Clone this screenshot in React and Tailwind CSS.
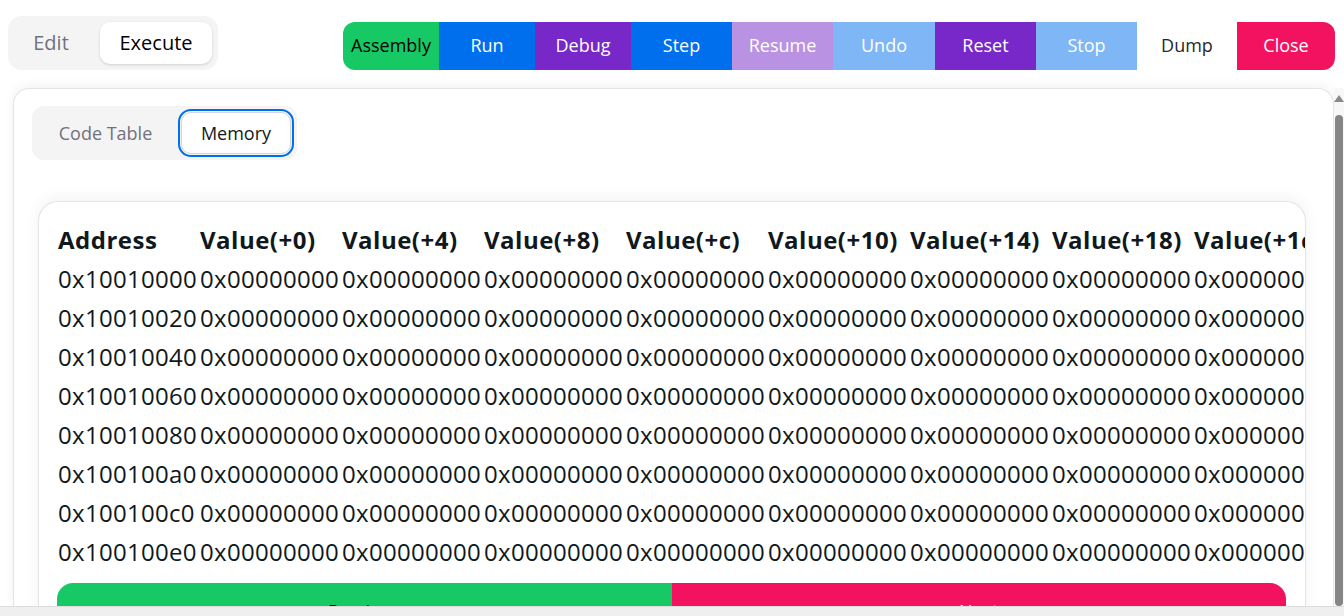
const actions = [
  { label: "Assembly", w: "w-[96px]", cls: "bg-[#17c964] text-black rounded-l-[12px]" },
  { label: "Run", w: "w-[96px]", cls: "bg-[#006fee] text-white" },
  { label: "Debug", w: "w-[96px]", cls: "bg-[#7828c8] text-white" },
  { label: "Step", w: "w-[101px]", cls: "bg-[#006fee] text-white" },
  { label: "Resume", w: "w-[101px]", cls: "bg-[#7828c8] text-white opacity-50" },
  { label: "Undo", w: "w-[102px]", cls: "bg-[#006fee] text-white opacity-50" },
  { label: "Reset", w: "w-[101px]", cls: "bg-[#7828c8] text-white" },
  { label: "Stop", w: "w-[101px]", cls: "bg-[#006fee] text-white opacity-50" },
  { label: "Dump", w: "w-[100px]", cls: "bg-transparent text-[#27272a]" },
  { label: "Close", w: "w-[98px]", cls: "bg-[#f31260] text-white rounded-r-[12px]" },
];

const headers = [
  "Address",
  "Value(+0)",
  "Value(+4)",
  "Value(+8)",
  "Value(+c)",
  "Value(+10)",
  "Value(+14)",
  "Value(+18)",
  "Value(+1c)",
];

const rows = Array.from({ length: 8 }, (_, i) =>
  "0x" + (0x10010000 + i * 0x20).toString(16).padStart(8, "0")
);

function MemoryTable() {
  return (
    <div className="grid grid-cols-[repeat(9,142px)] text-[24px] leading-[39px] text-[#11181c] whitespace-nowrap">
      {headers.map((h) => (
        <div key={h} className="font-bold tracking-[0.5px]">
          {h}
        </div>
      ))}
      {rows.map((addr) => (
        <div key={addr} className="contents">
          <div className="tracking-[0.3px]">{addr}</div>
          {Array.from({ length: 8 }, (_, j) => (
            <div key={j} className="tracking-[0.3px]">0x00000000</div>
          ))}
        </div>
      ))}
    </div>
  );
}

export default function App() {
  return (
    <div className="h-[616px] w-[1344px] flex flex-col overflow-hidden bg-white font-['Open_Sans',sans-serif]">
      <div className="flex-1 min-h-0 flex flex-col">
        {/* Top bar */}
        <div className="flex items-start justify-between pl-2 pr-[9px] pt-4">
          <div className="flex items-center h-[54px] w-[210px] rounded-[14px] bg-[#f4f4f5] pl-[6px] gap-[12px]">
            <div className="w-[74px] text-center text-[20px] text-[#71717a]">Edit</div>
            <div className="w-[112px] h-[42px] flex items-center justify-center rounded-[10px] bg-white text-[20px] text-black shadow-[0_1px_3px_rgba(0,0,0,0.15)]">
              Execute
            </div>
          </div>
          <div className="flex mt-[6px] h-[48px]">
            {actions.map((a) => (
              <div
                key={a.label}
                className={`${a.w} ${a.cls} h-full flex items-center justify-center text-[18px] pb-[1px]`}
              >
                {a.label}
              </div>
            ))}
          </div>
        </div>

        {/* Main panel */}
        <div className="flex-1 min-h-0 flex mt-[18px]">
          <div className="flex-1 min-w-0 ml-[13px] rounded-t-[16px] border border-b-0 border-[#e4e4e7] bg-white shadow-[0_-2px_12px_rgba(0,0,0,0.06)] overflow-hidden">
            <div className="pl-[18px] pt-[17px]">
              <div className="inline-flex items-center h-[54px] rounded-[12px] bg-[#f4f4f5] p-[3px] gap-[2px]">
                <div className="w-[141px] text-center text-[18px] text-[#71717a]">Code Table</div>
                <div className="w-[116px] h-[48px] rounded-[13px] border-2 border-[#006fee] p-[1px]">
                  <div className="h-full rounded-[10px] border border-[#d4d4d8] bg-white flex items-center justify-center text-[18px] text-[#11181c]">
                    Memory
                  </div>
                </div>
              </div>
            </div>

            <div className="ml-[24px] mr-[27px] mt-[41px] h-[440px] rounded-t-[20px] border border-b-0 border-[#e4e4e7] bg-white shadow-[0_-4px_16px_rgba(0,0,0,0.05)] overflow-hidden">
              <div className="pl-[19px] pt-[18px]">
                <MemoryTable />
              </div>
              <div className="flex mt-[12px] ml-[18px] mr-[19px] h-[50px]">
                <div className="flex-1 rounded-l-[16px] bg-[#17c964] text-black text-[18px] flex items-center justify-center pt-[6px]">
                  Previous
                </div>
                <div className="flex-1 rounded-r-[16px] bg-[#f31260] text-white text-[18px] flex items-center justify-center pt-[6px]">
                  Next
                </div>
              </div>
            </div>
          </div>

          {/* Vertical scrollbar */}
          <div className="w-[10px] flex flex-col items-center pt-[7px] bg-[#f7f7f7]">
            <div className="w-0 h-0 border-l-[5px] border-r-[5px] border-b-[7px] border-l-transparent border-r-transparent border-b-[#8a8a8a]" />
            <div className="mt-[13px] flex-1 w-[8px] rounded-[4px] bg-[#858585]" />
          </div>
        </div>
      </div>

      {/* Horizontal scrollbar track */}
      <div className="h-[10px] shrink-0 border-t border-[#dcdcdc] bg-[#efefef]" />
    </div>
  );
}
